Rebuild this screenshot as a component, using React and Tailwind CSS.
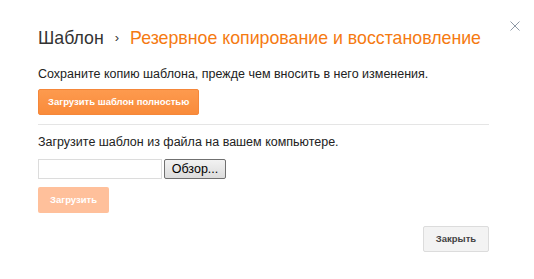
export default function App() {
  return (
    <div className="w-[534px] h-[279px] bg-white relative" style={{ fontFamily: '"Liberation Sans", Arial, sans-serif' }}>
      <button className="absolute left-[507px] top-[18px] w-[15px] h-[15px] flex items-center justify-center">
        <svg width="10" height="10" viewBox="0 0 10 10">
          <path d="M0.5 0.5L9.5 9.5M9.5 0.5L0.5 9.5" stroke="#8f9aa6" strokeWidth="1" />
        </svg>
      </button>
      <div className="pl-[38px] pr-[45px] pt-[27px]">
        <h1 className="text-[17.75px] leading-[22px] flex items-center whitespace-nowrap">
          <span className="text-[#333]">Шаблон</span>
          <span className="text-[#333] text-[13px] ml-[11px] mr-[11px]">›</span>
          <span className="text-[#f57a11]">Резервное копирование и восстановление</span>
        </h1>
        <p className="mt-[17px] text-[12.5px] leading-[16px] text-[#222]">
          Сохраните копию шаблона, прежде чем вносить в него изменения.
        </p>
        <button className="mt-[7px] h-[26px] px-[9px] rounded-[2px] border border-[#f5873a] bg-gradient-to-b from-[#fd9a4e] to-[#f98b3a] text-white text-[9.5px] font-bold">
          Загрузить шаблон полностью
        </button>
        <div className="mt-[9px] border-t border-[#e5e5e5]" />
        <p className="mt-[9px] text-[12.5px] leading-[16px] text-[#222]">
          Загрузите шаблон из файла на вашем компьютере.
        </p>
        <div className="mt-[9px] flex items-center gap-[2px]">
          <div className="w-[124px] h-[20px] border border-[#dcdcdc] bg-white" />
          <button className="w-[62px] h-[20px] border border-[#707070] rounded-[2px] bg-gradient-to-b from-[#f2f2f2] to-[#dcdcdc] text-[12.5px] text-black leading-none">
            Обзор...
          </button>
        </div>
        <button className="mt-[8px] h-[26px] w-[71px] rounded-[2px] bg-[#ffc09b] text-white text-[9.5px] font-bold">
          Загрузить
        </button>
        <div className="mt-[13px] flex justify-end">
          <button className="h-[26px] w-[66px] rounded-[2px] border border-[#dcdcdc] bg-[#f3f3f3] text-[#444] text-[9.5px] font-bold">
            Закрыть
          </button>
        </div>
      </div>
    </div>
  );
}
